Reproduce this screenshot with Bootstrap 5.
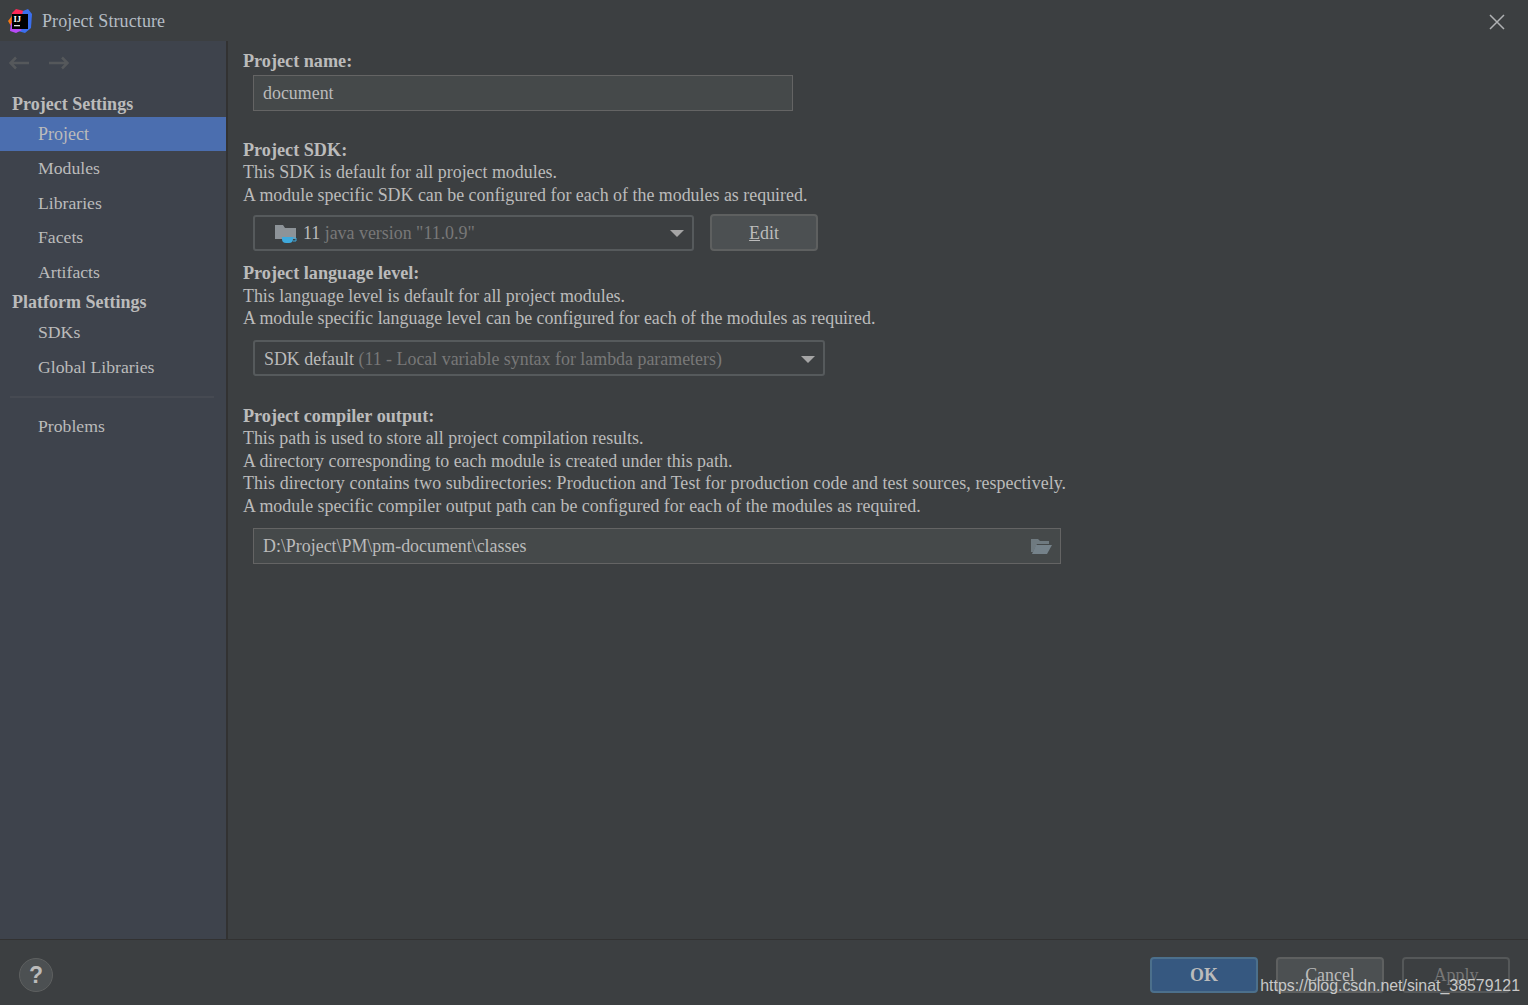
<!DOCTYPE html>
<html lang="en"><head><meta charset="utf-8"><title>Project Structure</title>
<link rel="stylesheet" href="https://cdn.jsdelivr.net/npm/bootstrap@5.3.0/dist/css/bootstrap.min.css">
<style>
html,body{height:100%;}
body{background:#3c3f41;color:#bbbbbb;font-family:"Liberation Serif",serif;font-size:17.9px;line-height:22.5px;overflow:hidden;}
.shell{height:1005px;}
.titlebar{height:41px;padding:2px 23px 0 8px;}
.titlebar .ttl{font-size:18px;letter-spacing:.1px;color:#b4bcc4;margin-left:9px;}
.mid{height:898px;}
.side{width:228px;background:#3e434c;border-right:2px solid #323232;flex:none;}
.navrow{height:42px;padding:2px 0 0 8px;gap:18px;}
.head{font-weight:700;font-size:18px;color:#bbbbbb;padding-left:12px;height:24px;line-height:22px;}
.head1{margin-top:10px;}
.itm{padding-left:38px;height:34.5px;line-height:34.5px;font-size:17.7px;color:#bbbbbb;}
.itm.sel{background:#4b6eaf;height:34px;line-height:34px;font-size:18px;color:#bbbbbb;}
.head2{margin-top:2px;margin-bottom:0;height:22px;}
.head2 + .itm{margin-top:2px;}
.sep{height:2px;background:#464a52;margin:12px 12px 11px 10px;}
.pane{padding:9px 0 0 15px;}
.lbl{font-weight:700;font-size:18.2px;}
.fld{height:36px;margin-left:10px;border:1px solid #646464;background:#45494a;padding:0 9px;line-height:34px;}
.drop{height:36px;margin-left:10px;border:2px solid #565a5c;border-radius:3px;padding:1px 8px 0 9px;background:#3c3f41;}
.dim{color:#787878;}
.caret-tri{width:0;height:0;border-left:7px solid transparent;border-right:7px solid transparent;border-top:7px solid #a5a5a5;}
.ide-btn{height:36px;width:108px;border:2px solid #5e6060;border-radius:4px;background:#4c5052;color:#bbbbbb;text-align:center;line-height:33px;flex:none;}
.ide-btn.prim{background:#365880;border-color:#4c708c;font-weight:700;}
.ide-btn.off{background:transparent;border-color:#555859;color:#777;}
.sp1{height:28px;}.sp2{height:11px;}.sp3{height:29px;}
.foot{height:66px;border-top:1px solid #323232;padding:17px 18px 0 19px;position:relative;}
.hlp{width:34px;height:34px;margin-top:1px;border-radius:50%;background:#4c5052;border:1px solid #5e6060;color:#bbb;font:700 23px/32px "Liberation Sans",sans-serif;text-align:center;}
.btns{gap:18px;}
.mark-w{position:absolute;right:8px;bottom:9px;font:15.9px/20px "Liberation Sans",sans-serif;color:#c8c8c8;}
.wfa{width:540px;margin-top:2px;}.wsd{width:441px;}.wlg{width:572px;margin-top:10px;padding-top:3px;}.wout{width:808px;margin-top:11px;padding-right:7px;}
.sdk-row{margin-top:9px;}
.jdk-ico{margin:0 6px 0 10px;}
.sdk-edit{margin-left:16px;margin-top:-1px;height:37px;line-height:35px;}
.wide-line{letter-spacing:.07px;}
</style></head><body>
<div class="shell d-flex flex-column">
 <div class="titlebar d-flex align-items-center">
  <svg width="25" height="25" viewBox="0 0 25 25"><path d="M8 0l8 2-3 10-10 3 1-11z" fill="#fe2857"/><path d="M15 2l5-2 4 5-1 14-6 5-7-2z" fill="#3b6fee"/><path d="M4 7L0 12l3 5z" fill="#f97a12"/><path d="M3 14l-1 8 6 2 6-3z" fill="#b74af7"/><rect x="4" y="5" width="16" height="15" fill="#000"/><rect x="6" y="16" width="6" height="1.300" fill="#ddd"/><text x="5.500" y="12.500" font-family="Liberation Serif" font-weight="700" font-size="8.500" fill="#fff">IJ</text></svg>
  <span class="ttl">Project Structure</span>
  <svg class="ms-auto" width="16" height="16" viewBox="0 0 16 16"><path d="M1 1l14 14M15 1L1 15" stroke="#afb1b3" stroke-width="1.500"/></svg>
 </div>
 <div class="mid d-flex">
  <div class="side">
   <div class="navrow d-flex align-items-center">
    <svg width="22" height="14" viewBox="0 0 22 14"><path d="M21 7H3M8 1.500L2.500 7 8 12.500" fill="none" stroke="#55585b" stroke-width="2.500"/></svg>
    <svg width="22" height="14" viewBox="0 0 22 14"><path d="M1 7h18M14 1.500L19.500 7 14 12.500" fill="none" stroke="#55585b" stroke-width="2.500"/></svg>
   </div>
   <div class="head head1">Project Settings</div>
   <div class="itm sel">Project</div>
   <div class="itm">Modules</div>
   <div class="itm">Libraries</div>
   <div class="itm">Facets</div>
   <div class="itm">Artifacts</div>
   <div class="head head2">Platform Settings</div>
   <div class="itm">SDKs</div>
   <div class="itm">Global Libraries</div>
   <div class="sep"></div>
   <div class="itm">Problems</div>
  </div>
  <div class="pane flex-grow-1">
   <div class="lbl">Project name:</div>
   <div class="fld wfa">document</div>
   <div class="sp1"></div>
   <div class="lbl">Project SDK:</div>
   <div>This SDK is default for all project modules.</div>
   <div>A module specific SDK can be configured for each of the modules as required.</div>
   <div class="d-flex sdk-row">
    <div class="drop d-flex align-items-center wsd">
     <svg class="jdk-ico" width="23" height="22" viewBox="0 0 23 22"><path d="M1 2h8l2 3h11v11H1z" fill="#8d9398"/><path d="M8 14h11v2a4 4 0 0 1-4 4h-3a4 4 0 0 1-4-4z" fill="#3fa9dc"/><path d="M19 15h3v3h-3" fill="none" stroke="#3fa9dc"/></svg>
     <span>11 <span class="dim">java version "11.0.9"</span></span>
     <span class="caret-tri ms-auto"></span>
    </div>
    <div class="ide-btn sdk-edit"><u>E</u>dit</div>
   </div>
   <div class="sp2"></div>
   <div class="lbl">Project language level:</div>
   <div>This language level is default for all project modules.</div>
   <div>A module specific language level can be configured for each of the modules as required.</div>
   <div class="drop d-flex align-items-center wlg">
    <span>SDK default <span class="dim">(11 - Local variable syntax for lambda parameters)</span></span>
    <span class="caret-tri ms-auto"></span>
   </div>
   <div class="sp3"></div>
   <div class="lbl">Project compiler output:</div>
   <div>This path is used to store all project compilation results.</div>
   <div>A directory corresponding to each module is created under this path.</div>
   <div class="wide-line">This directory contains two subdirectories: Production and Test for production code and test sources, respectively.</div>
   <div>A module specific compiler output path can be configured for each of the modules as required.</div>
   <div class="fld wout d-flex align-items-center justify-content-between">
    <span>D:\Project\PM\pm-document\classes</span>
    <svg width="23" height="17" viewBox="0 0 23 17"><path d="M1 1h7l2 2h9v3H7L3 14H1z" fill="#6f7a80"/><path d="M6 7h16l-5 9H2z" fill="#75828a"/></svg>
   </div>
  </div>
 </div>
 <div class="foot d-flex justify-content-between align-items-start">
  <div class="hlp">?</div>
  <div class="btns d-flex">
   <div class="ide-btn prim">OK</div>
   <div class="ide-btn">Cancel</div>
   <div class="ide-btn off">Apply</div>
  </div>
  <div class="mark-w">https://blog.csdn.net/sinat_38579121</div>
 </div>
</div>
</body></html>
